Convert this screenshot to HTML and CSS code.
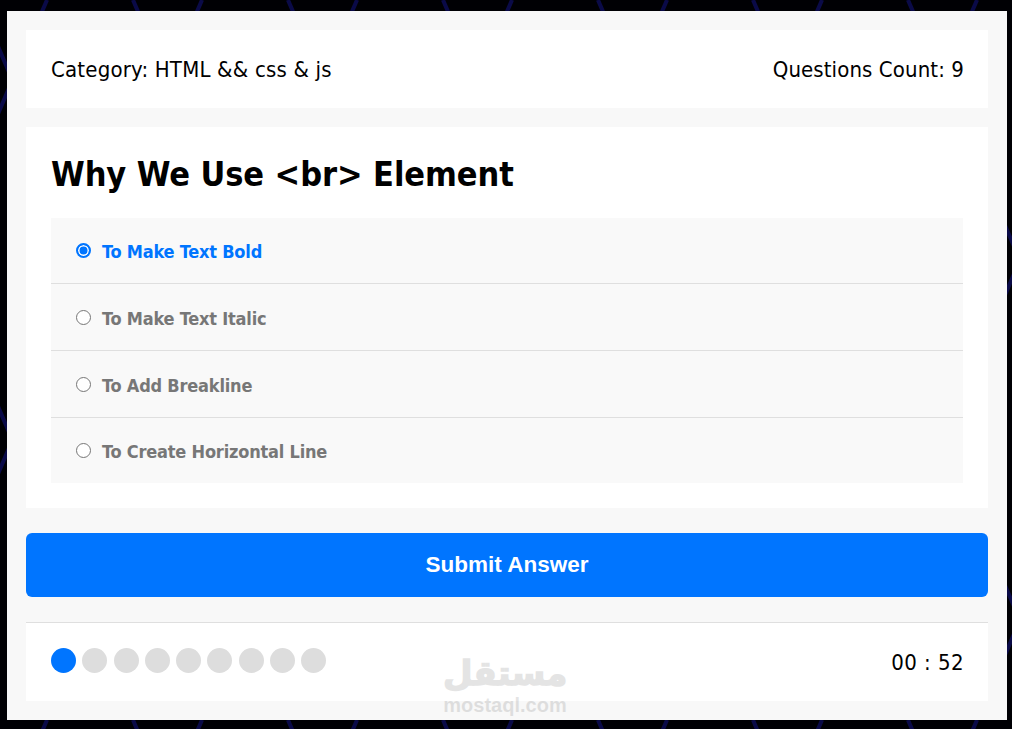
FILE: index.html
```html
<!DOCTYPE html>
<html>
<head>
    <title>Quiz App</title>
    <meta charset="utf-8">
    <link rel="stylesheet" href="styles.css">
</head>
<body>

<div class="quiz-app">
    <div class="quiz-info">
        <div class="category">Category: HTML &amp;&amp; css &amp; js</div>
        <div class="count">Questions Count: 9</div>
    </div>

    <div class="quiz-area">
        <h2>Why We Use &lt;br&gt; Element</h2>
        <div class="answers-area">
            <div class="answer checked">
                <span class="radio"></span>
                <label>To Make Text Bold</label>
            </div>
            <div class="answer">
                <span class="radio"></span>
                <label>To Make Text Italic</label>
            </div>
            <div class="answer">
                <span class="radio"></span>
                <label>To Add Breakline</label>
            </div>
            <div class="answer">
                <span class="radio"></span>
                <label>To Create Horizontal Line</label>
            </div>
        </div>
    </div>

    <button class="submit-button">Submit Answer</button>

    <div class="bullets">
        <div class="spans">
            <span class="on"></span>
            <span></span>
            <span></span>
            <span></span>
            <span></span>
            <span></span>
            <span></span>
            <span></span>
            <span></span>
        </div>
        <div class="countdown">00 : 52</div>
    </div>

    <div class="watermark">
        <div class="wm-ar">مستقل</div>
        <div class="wm-en">mostaql.com</div>
    </div>
</div>

</body>
</html>
```

FILE: styles.css
```css
* {
  box-sizing: border-box;
}
html, body {
  height: 100%;
}
body {
  margin: 0;
  padding: 11px 5px 9px 7px;
  background-color: #000004;
  background-image: url("data:image/svg+xml,%3Csvg xmlns='http://www.w3.org/2000/svg' width='155' height='360'%3E%3Cg stroke='%230a0a48' stroke-width='4' fill='none'%3E%3Cpath d='M47 0L-108 360M202 0L47 360M133 0L288 360M-22 0L133 360'/%3E%3C/g%3E%3C/svg%3E");
  font-family: "DejaVu Sans Condensed", "DejaVu Sans", sans-serif;
}
.quiz-app {
  position: relative;
  height: 709px;
  background-color: #f8f8f8;
  padding: 19px;
}
.quiz-info {
  display: flex;
  justify-content: space-between;
  align-items: center;
  height: 78px;
  padding: 0 24px 0 25px;
  background-color: #fff;
  font-size: 22px;
  color: #000;
}
.category {
  letter-spacing: 0.2px;
}
.count {
  letter-spacing: 0.1px;
}
.quiz-area {
  margin-top: 19px;
  height: 381px;
  padding: 25px;
  background-color: #fff;
}
.quiz-area h2 {
  margin: 0;
  height: 66px;
  font-size: 34px;
  line-height: 44px;
  font-weight: bold;
  letter-spacing: -0.08px;
  color: #000;
}
.answers-area {
  background-color: #f9f9f9;
}
.answer {
  display: flex;
  align-items: center;
  height: 67px;
  padding: 0 25px;
  border-bottom: 1px solid #dfdfdf;
}
.answer:first-child {
  height: 66px;
}
.answer:last-child {
  height: 65px;
  border-bottom: 0;
}
.radio {
  width: 15px;
  height: 15px;
  margin-right: 11px;
  border: 1px solid #767676;
  border-radius: 50%;
  background-color: #fff;
}
.answer label {
  padding-top: 2px;
  font-size: 18px;
  font-weight: bold;
  letter-spacing: -0.2px;
  color: #777;
}
.answer.checked label {
  color: #0075ff;
}
.answer.checked .radio {
  border: 2px solid #0075ff;
  box-shadow: inset 0 0 0 1.5px #fff;
  background-color: #0075ff;
}
.submit-button {
  display: block;
  width: 100%;
  height: 64px;
  margin-top: 25px;
  border: 0;
  border-radius: 6px;
  background-color: #0075ff;
  color: #fff;
  font-family: "Liberation Sans", Arial, sans-serif;
  font-size: 22.5px;
  font-weight: bold;
}
.bullets {
  display: flex;
  justify-content: space-between;
  align-items: center;
  height: 79px;
  margin-top: 25px;
  padding: 0 24px 0 25px;
  border-top: 1px solid #dfdfdf;
  background-color: #fff;
}
.spans {
  display: flex;
  gap: 6.25px;
  margin-bottom: 4px;
}
.spans span {
  width: 25px;
  height: 25px;
  border-radius: 50%;
  background-color: #ddd;
}
.spans span.on {
  background-color: #0075ff;
}
.countdown {
  font-size: 22px;
  letter-spacing: 0.45px;
  color: #000;
}
/* faint site stamp over the corner of the card */
.watermark {
  position: absolute;
  left: 436px;
  top: 645px;
  width: 124px;
  text-align: center;
  color: #000;
  opacity: 0.1;
  line-height: 1;
}
.wm-ar {
  font-family: "DejaVu Sans", sans-serif;
  font-size: 34px;
  font-weight: bold;
  -webkit-text-stroke: 1.5px #000;
  height: 40px;
}
.wm-en {
  font-family: "Liberation Sans", Arial, sans-serif;
  font-size: 20px;
  line-height: 18px;
  font-weight: bold;
}
```
